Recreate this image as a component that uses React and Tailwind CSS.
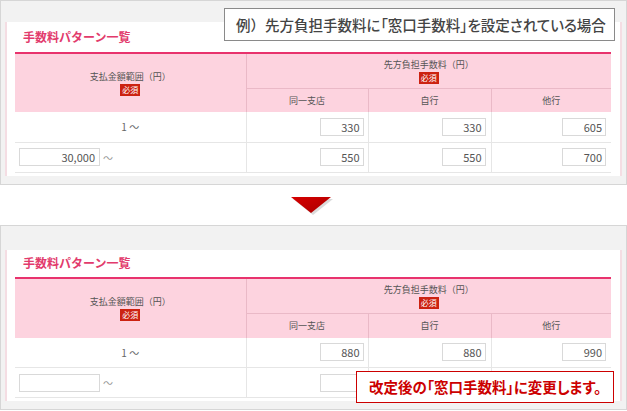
import React from 'react';

const font = { fontFamily: '"Noto Sans CJK JP", "Noto Sans", sans-serif' };

const Badge = () => (
    <span className="inline-block bg-[#cc2211] text-white text-[8px] leading-[12px] px-[2px]">必須</span>
);

const FeeInput = ({ value }) => (
    <div className="ml-auto w-[44px] h-[18px] border border-[#d9d9d9] bg-white text-right pr-[3px] text-[11px] leading-[16px] text-[#555]">
        {value}
    </div>
);

const PatternPanel = ({ rows, padTop, titleH, headH }) => (
    <div className="border border-[#d6d6d6] bg-[#f2f2f2] px-[4px] pb-[8px]" style={{ paddingTop: padTop }}>
        <div className="bg-white border-l-2 border-l-[#f4dde3] border-r-2 border-r-[#f4dde3] pl-[8px] pr-[8px]">
            <div className="flex items-center pl-[8px] text-[12px] font-bold text-[#e23b6c]" style={{ height: titleH }}>
                手数料パターン一覧
            </div>
            <table className="w-[596px] border-collapse table-fixed text-[9px] text-[#555]">
                <colgroup>
                    <col className="w-[231px]" />
                    <col className="w-[122px]" />
                    <col className="w-[123px]" />
                    <col className="w-[120px]" />
                </colgroup>
                <thead>
                    <tr className="bg-[#fdd3df] border-t-2 border-t-[#e8336d]">
                        <th rowSpan={2} className="font-normal border-r border-r-[#eab9c7] align-middle">
                            <div className="leading-[13px]">支払金額範囲（円）</div>
                            <Badge />
                        </th>
                        <th colSpan={3} className="font-normal border-b border-b-[#eab9c7]" style={{ height: headH }}>
                            <div className="leading-[13px]">先方負担手数料（円）</div>
                            <Badge />
                        </th>
                    </tr>
                    <tr className="bg-[#fdd3df] h-[24px]">
                        <th className="font-normal border-r border-r-[#eab9c7]">同一支店</th>
                        <th className="font-normal border-r border-r-[#eab9c7]">自行</th>
                        <th className="font-normal">他行</th>
                    </tr>
                </thead>
                <tbody>
                    {rows.map((r, i) => (
                        <tr key={i} className="h-[30px] border-b border-b-[#e6e6e6]">
                            <td className="border-r border-r-[#e6e6e6]">
                                {r.from === '1' ? (
                                    <div className="text-center text-[10px] text-[#666]">1 ～</div>
                                ) : (
                                    <div className="flex items-center pl-[4px] text-[11px]">
                                        <div className="w-[81px] h-[18px] border border-[#d9d9d9] text-right pr-[4px] leading-[16px]">{r.from}</div>
                                        <span className="ml-[3px] text-[10px] text-[#999]">～</span>
                                    </div>
                                )}
                            </td>
                            <td className="border-r border-r-[#e6e6e6] pr-[4px]"><FeeInput value={r.a} /></td>
                            <td className="border-r border-r-[#e6e6e6] pr-[5px]"><FeeInput value={r.b} /></td>
                            <td className="pr-[5px]"><FeeInput value={r.c} /></td>
                        </tr>
                    ))}
                </tbody>
            </table>
            <div className="h-[3px]" />
        </div>
    </div>
);

const App = () => {
    return (
        <div className="w-[627px] h-[411px] bg-white relative overflow-hidden" style={font}>
            <PatternPanel
                padTop={21}
                titleH={30}
                headH={35}
                rows={[
                    { from: '1', a: '330', b: '330', c: '605' },
                    { from: '30,000', a: '550', b: '550', c: '700' },
                ]}
            />

            {/* down arrow */}
            <div className="flex justify-center h-[40px] pt-[12px]">
                <svg width="44" height="18" viewBox="0 0 44 18" className="ml-[-4px]">
                    <defs>
                        <linearGradient id="ar" x1="0" y1="0" x2="1" y2="1">
                            <stop offset="0" stopColor="#d70000" />
                            <stop offset="1" stopColor="#a80000" />
                        </linearGradient>
                    </defs>
                    <polygon points="2,1 42,1 22,17" fill="#999" opacity="0.35" transform="translate(1,1)" />
                    <polygon points="1,0 41,0 21,16" fill="url(#ar)" />
                </svg>
            </div>

            <PatternPanel
                padTop={24}
                titleH={27}
                headH={36}
                rows={[
                    { from: '1', a: '880', b: '880', c: '990' },
                    { from: '', a: '', b: '', c: '' },
                ]}
            />

            {/* callouts */}
            <div className="absolute left-[224px] top-[8px] w-[391px] h-[33px] border border-[#8a8a8a] bg-white flex items-center pl-[11px] whitespace-nowrap text-[14.5px] font-medium text-[#444]">
                <span>例）</span>
                <span className="[font-feature-settings:'palt']">先方負担手数料に「窓口手数料」を設定されている場合</span>
            </div>
            <div className="absolute left-[356px] top-[371px] w-[258px] h-[32px] border border-[#cc0000] bg-white flex items-center pl-[12px] whitespace-nowrap text-[14.5px] font-bold text-[#cc0000] [font-feature-settings:'palt']">
                改定後の「窓口手数料」に変更します。
            </div>
        </div>
    );
};

export default App;
